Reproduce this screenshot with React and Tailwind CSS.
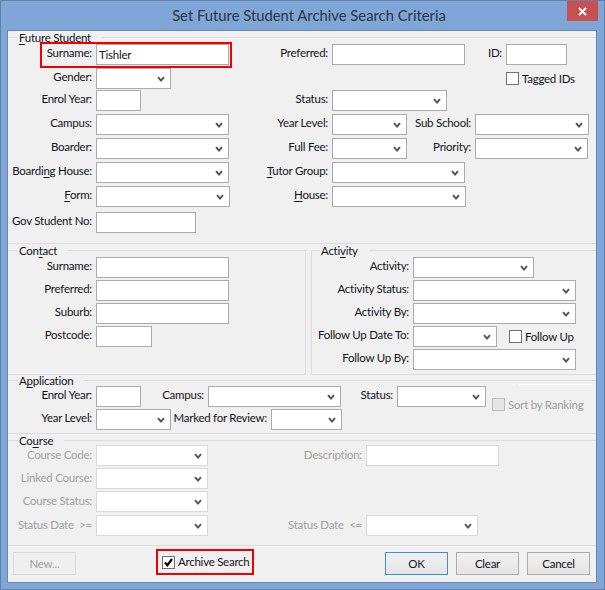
import React from 'react';

// Grey chevron used by all the combo boxes
const Chevron = () => (
  <svg width="8" height="7" viewBox="0 0 8 7" className="absolute right-[5px] top-[7px]">
    <path d="M1 1.2 L4 4.6 L7 1.2" fill="none" stroke="#555" strokeWidth="2" />
  </svg>
);

const Box = ({ w, select, disabled, children }) => (
  <div
    className={`relative h-[21px] shrink-0 bg-white border pl-[2px] leading-[19px] ${
      disabled ? 'border-[#d9d9d9]' : 'border-[#ababab]'
    }`}
    style={{ width: w }}
  >
    {children}
    {select && <Chevron />}
  </div>
);

// lw is the space from the previous field up to this field's box
const Field = ({ label, lw, w, select, disabled, highlight, children }) => (
  <div className="relative flex shrink-0">
    <div
      className={`flex justify-end whitespace-nowrap pr-[4px] ${
        disabled ? 'text-[#a0a0a0] leading-[20px]' : 'leading-[18px]'
      }`}
      style={{ width: lw }}
    >
      <span>{label}</span>
    </div>
    <Box w={w} select={select} disabled={disabled}>
      {children}
    </Box>
    {highlight && (
      <div className="absolute left-[32px] top-[-2px] w-[192px] h-[26px] border-2 border-[#f00000]" />
    )}
  </div>
);

const Check = ({ label, checked, disabled }) => (
  <div className="flex items-center gap-[3px] h-[21px]">
    <div
      className={`relative w-[13px] h-[13px] border ${
        disabled ? 'bg-[#e6e6e6] border-[#bcbcbc]' : 'bg-white border-[#707070]'
      }`}
    >
      {checked && (
        <svg width="11" height="11" viewBox="0 0 11 11" className="absolute left-0 top-0">
          <path d="M2 5.5 L4.4 8.2 L9 2" fill="none" stroke="#000" strokeWidth="2.2" />
        </svg>
      )}
    </div>
    <span className={`whitespace-nowrap ${disabled ? 'text-[#a0a0a0]' : ''}`}>{label}</span>
  </div>
);

const Heading = ({ indent = 'w-[10px]', h, tc = '', children }) => (
  <div className={`flex items-center ${h}`}>
    <div className={`h-px bg-[#dcdcdc] ${indent}`} />
    <span className={`px-[1px] whitespace-nowrap ${tc}`}>{children}</span>
    <div className="h-px bg-[#dcdcdc] flex-1 ml-[10px]" />
  </div>
);

const Btn = ({ children, disabled, active, className = '' }) => (
  <div
    className={`w-[63px] h-[23px] flex items-center justify-center border ${
      disabled
        ? 'border-[#d9d9d9] bg-[#efefef] text-[#a0a0a0]'
        : active
          ? 'border-[#3d8fdc] bg-gradient-to-b from-[#f0f0f0] to-[#e5e5e5]'
          : 'border-[#acacac] bg-gradient-to-b from-[#f0f0f0] to-[#e5e5e5]'
    } ${className}`}
  >
    {children}
  </div>
);

const U = ({ children }) => <span className="underline underline-offset-2">{children}</span>;

export default function App() {
  return (
    <div className="relative w-[605px] h-[590px] bg-[#7fa6d6] border border-[#5f82ad] font-['Lato',sans-serif] text-[11.5px] tracking-[-0.25px] text-[#141420]">
      {/* Title bar */}
      <div className="h-[29px] pl-[13px] flex items-center justify-center text-[14.8px] tracking-normal text-[#2c3440]">
        Set Future Student Archive Search Criteria
      </div>
      <div className="absolute right-[6px] top-0 w-[31px] h-[20px] bg-[#c75050] flex items-center justify-center">
        <svg width="9" height="9" viewBox="0 0 9 9">
          <path d="M1 1 L8 8 M8 1 L1 8" stroke="#fff" strokeWidth="2" />
        </svg>
      </div>

      <div className="ml-[6px] w-[590px] h-[553px] bg-[#f0f0f0] border border-[#6288b6] flex flex-col">
        {/* Future Student */}
        <Heading h="h-[13px]">
          <U>F</U>uture Student
        </Heading>
        <div className="flex">
          <Field label="Surname:" lw={88} w={133} highlight>
            Tishler
          </Field>
          <Field label="Preferred:" lw={103} w={133} />
          <Field label="ID:" lw={41} w={61} />
        </div>
        <div className="flex mt-[3px]">
          <Field label="Gender:" lw={88} w={75} select />
          <div className="ml-[335px]">
            <Check label="Tagged IDs" />
          </div>
        </div>
        <div className="flex mt-[1px]">
          <Field label="Enrol Year:" lw={88} w={45} />
          <Field label="Status:" lw={191} w={115} select />
        </div>
        <div className="flex mt-[3px]">
          <Field label="Campus:" lw={88} w={133} select />
          <Field label="Year Level:" lw={103} w={75} select />
          <Field label="Sub School:" lw={68} w={114} select />
        </div>
        <div className="flex mt-[3px]">
          <Field label="Boarder:" lw={88} w={133} select />
          <Field label="Full Fee:" lw={103} w={75} select />
          <Field label="Priority:" lw={68} w={113} select />
        </div>
        <div className="flex mt-[3px]">
          <Field
            label={
              <>
                Boardi<U>n</U>g House:
              </>
            }
            lw={88}
            w={133}
            select
          />
          <Field
            label={
              <>
                <U>T</U>utor Group:
              </>
            }
            lw={103}
            w={133}
            select
          />
        </div>
        <div className="flex mt-[3px]">
          <Field
            label={
              <>
                <U>F</U>orm:
              </>
            }
            lw={88}
            w={134}
            select
          />
          <Field
            label={
              <>
                <U>H</U>ouse:
              </>
            }
            lw={102}
            w={134}
            select
          />
        </div>
        <div className="flex mt-[5px]">
          <Field label="Gov Student No:" lw={88} w={100} />
        </div>

        <div className="mt-[10px] border-t border-[#dcdcdc] flex gap-[5px]">
          {/* Contact */}
          <div className="w-[298px] h-[125px] mt-[6px] border-r border-b border-[#dcdcdc]">
            <Heading h="h-[13px] -mt-[6px]">
              Con<U>t</U>act
            </Heading>
            <Field label="Surname:" lw={88} w={133} />
            <div className="mt-[2px]">
              <Field label="Preferred:" lw={88} w={133} />
            </div>
            <div className="mt-[2px]">
              <Field label="Suburb:" lw={88} w={133} />
            </div>
            <div className="mt-[2px]">
              <Field label="Postcode:" lw={88} w={56} />
            </div>
          </div>

          {/* Activity */}
          <div className="flex-1 h-[125px] mt-[6px] border-l border-b border-[#dcdcdc]">
            <Heading h="h-[13px] -mt-[6px]" indent="w-[8px]">
              Acti<U>v</U>ity
            </Heading>
            <Field label="Activity:" lw={101} w={121} select />
            <div className="mt-[2px]">
              <Field label="Activity Status:" lw={101} w={163} select />
            </div>
            <div className="mt-[2px]">
              <Field label="Activity By:" lw={101} w={163} select />
            </div>
            <div className="flex mt-[2px]">
              <Field label="Follow Up Date To:" lw={101} w={84} select />
              <div className="ml-[12px]">
                <Check label="Follow Up" />
              </div>
            </div>
            <div className="mt-[2px]">
              <Field label="Follow Up By:" lw={101} w={163} select />
            </div>
          </div>
        </div>

        {/* Application */}
        <Heading h="h-[11px]">
          A<U>p</U>plication
        </Heading>
        <div className="flex">
          <div className="w-[478px]">
            <div className="flex">
              <Field label="Enrol Year:" lw={88} w={45} />
              <Field label="Campus:" lw={67} w={133} select />
              <Field label="Status:" lw={56} w={89} select />
            </div>
            <div className="flex mt-[2px]">
              <Field label="Year Level:" lw={88} w={75} select />
              <Field label="Marked for Review:" lw={100} w={71} select />
            </div>
          </div>
          <div className="relative ml-[6px] mt-[8px]">
            <div className="absolute left-[27px] top-[-10px] w-[73px] h-px bg-white" />
            <Check label="Sort by Ranking" disabled />
          </div>
        </div>

        <div className="mt-[3px] border-t border-[#dcdcdc]" />

        {/* Course */}
        <Heading h="h-[12px] -mb-[1px]" tc="pt-[2px]">
          Co<U>u</U>rse
        </Heading>
        <div className="flex">
          <Field label="Course Code:" lw={88} w={112} select disabled />
          <Field label="Description:" lw={158} w={133} disabled />
        </div>
        <div className="mt-[2px]">
          <Field label="Linked Course:" lw={88} w={112} select disabled />
        </div>
        <div className="mt-[2px]">
          <Field label="Course Status:" lw={88} w={112} select disabled />
        </div>
        <div className="flex mt-[3px]">
          <Field label={'Status Date\u00a0\u00a0>='} lw={88} w={112} select disabled />
          <Field label={'Status Date\u00a0\u00a0<='} lw={158} w={112} select disabled />
        </div>

        {/* Footer buttons */}
        <div className="mt-[9px] border-t border-[#dcdcdc] flex-1 flex items-start pl-[5px]">
          <Btn disabled className="mt-[6px]">
            New...
          </Btn>
          <div className="ml-[80px] mt-[3px] w-[98px] h-[26px] border-2 border-[#f00000] pl-[4px] flex items-center">
            <Check label="Archive Search" checked />
          </div>
          <Btn active className="mt-[6px] ml-[131px]">
            OK
          </Btn>
          <Btn className="mt-[6px] ml-[8px]">Clear</Btn>
          <Btn className="mt-[6px] ml-[8px]">Cancel</Btn>
        </div>
      </div>
    </div>
  );
}
